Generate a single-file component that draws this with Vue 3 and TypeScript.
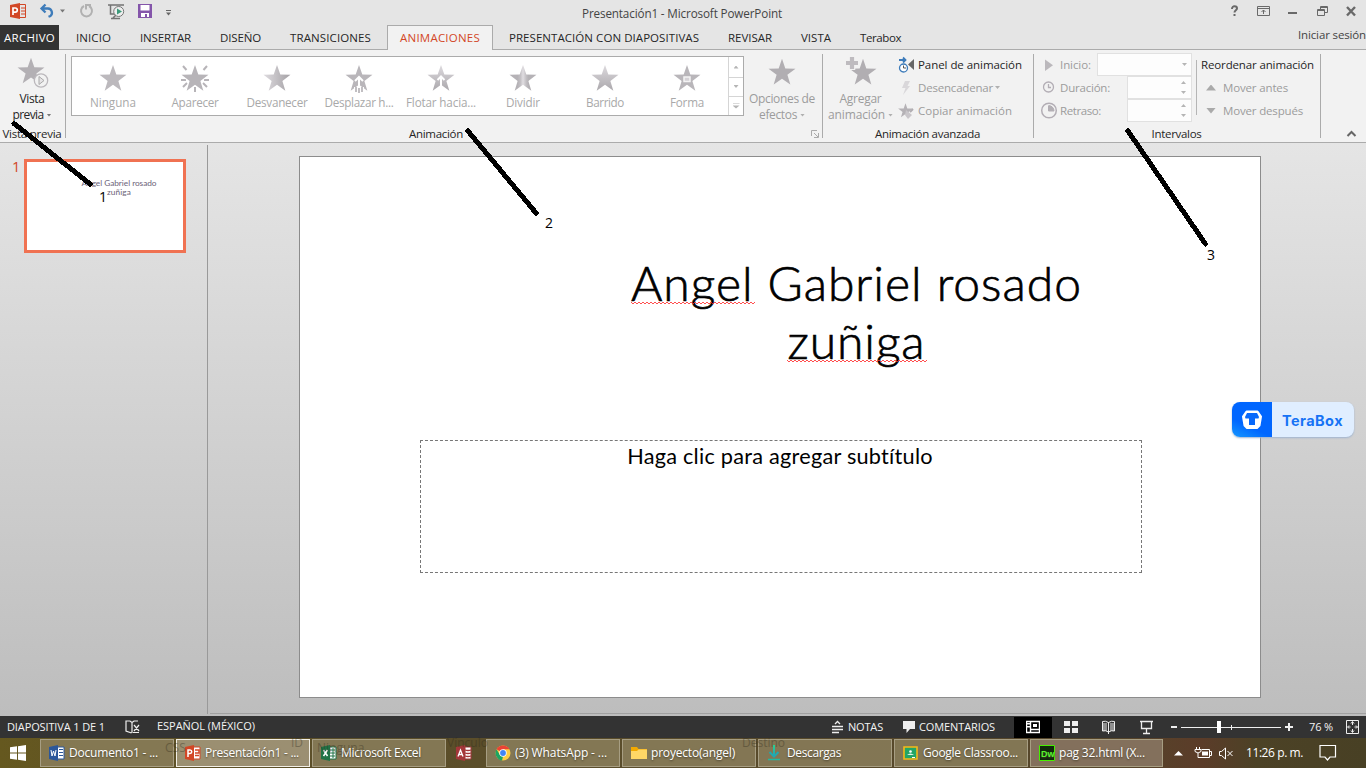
<script setup lang="ts">
import type { Directive } from 'vue'

// Tracks a label in or out so that it takes exactly the given width.
const vFit: Directive<HTMLElement, number> = {
  mounted(el, { value }) {
    const natural = el.getBoundingClientRect().width
    const count = (el.textContent ?? '').trim().length
    el.style.letterSpacing = `${(value - natural) / count}px`
  },
}

interface Label { text: string; width: number }

const tabs: Label[] = [
  { text: 'INICIO', width: 35 },
  { text: 'INSERTAR', width: 51 },
  { text: 'DISEÑO', width: 41 },
  { text: 'TRANSICIONES', width: 81 },
  { text: 'ANIMACIONES', width: 80 },
  { text: 'PRESENTACIÓN CON DIAPOSITIVAS', width: 190 },
  { text: 'REVISAR', width: 44 },
  { text: 'VISTA', width: 30 },
  { text: 'Terabox', width: 41 },
]

const effects: (Label & { kind: string; fill: string })[] = [
  { text: 'Ninguna', width: 46, kind: 'none', fill: '#bcb9bd' },
  { text: 'Aparecer', width: 47, kind: 'appear', fill: '#b7b4b8' },
  { text: 'Desvanecer', width: 61, kind: 'fade', fill: 'url(#fade)' },
  { text: 'Desplazar h...', width: 69, kind: 'fly', fill: '#b9b6ba' },
  { text: 'Flotar hacia...', width: 70, kind: 'float', fill: 'url(#rise)' },
  { text: 'Dividir', width: 34, kind: 'split', fill: 'url(#split)' },
  { text: 'Barrido', width: 38, kind: 'wipe', fill: 'url(#rise)' },
  { text: 'Forma', width: 34, kind: 'shape', fill: '#b9b6ba' },
]

const tasks: (Label & { icon: string })[] = [
  { text: 'Documento1 - ...', width: 89, icon: 'word' },
  { text: 'Presentación1 - ...', width: 94, icon: 'ppt' },
  { text: 'Microsoft Excel', width: 80, icon: 'excel' },
  { text: '', width: 0, icon: 'access' },
  { text: '(3) WhatsApp - ...', width: 92, icon: 'chrome' },
  { text: 'proyecto(angel)', width: 84, icon: 'folder' },
  { text: 'Descargas', width: 54, icon: 'download' },
  { text: 'Google Classroo...', width: 95, icon: 'classroom' },
  { text: 'pag 32.html (X...', width: 86, icon: 'dw' },
]

function starPoints(radius: number): string {
  return Array.from({ length: 10 }, (_, i) => {
    const r = i % 2 ? radius * 0.4 : radius
    const a = (Math.PI * i) / 5
    return `${(r * Math.sin(a)).toFixed(2)},${(-r * Math.cos(a)).toFixed(2)}`
  }).join(' ')
}
const star = starPoints(14.6)

function wave(width: number): string {
  return Array.from({ length: Math.floor(width / 2) + 1 }, (_, i) => `${i * 2},${i % 2 ? 3 : 1}`).join(' ')
}
</script>

<template>
  <div class="screen">
    <svg class="defs" width="0" height="0">
      <linearGradient id="fade"><stop offset=".1" stop-color="#d9d6da" /><stop offset=".9" stop-color="#aaa7ab" /></linearGradient>
      <linearGradient id="rise" x2="0" y2="1"><stop offset=".1" stop-color="#d8d5d9" /><stop offset=".9" stop-color="#b0adb1" /></linearGradient>
      <linearGradient id="split"><stop offset=".3" stop-color="#b5b2b6" /><stop offset=".4" stop-color="#c2bfc3" /><stop offset=".5" stop-color="#e0dde1" /><stop offset=".62" stop-color="#c2bfc3" /><stop offset=".7" stop-color="#b5b2b6" /></linearGradient>
      <linearGradient id="dl" x2="0" y2="1"><stop stop-color="#2dd08f" /><stop offset="1" stop-color="#1fa3b8" /></linearGradient>
    </svg>

    <header class="titlebar">
      <svg width="180" height="25">
        <path d="M10 5l10-2v16l-10-2z" fill="#d24726" />
        <path d="M20 4.500h5.500v13H20M21 8h4M21 11h4M21 14h4" fill="none" stroke="#d24726" />
        <path d="M13 15V8h2.200a2 2 0 010 4.200H13" fill="none" stroke="#fff" stroke-width="1.700" />
        <path d="M45.500 4.500L41.500 8.500l4 4M42 8.500h6a4.300 4.300 0 012.500 7.500l-2 .8" fill="none" stroke="#3e7cba" stroke-width="2.300" />
        <path d="M60 9.500h5l-2.500 3z" fill="#777" />
        <path d="M84 6a5.500 5.500 0 105 0M86 9.500V5h5" fill="none" stroke="#b1b1b1" stroke-width="2" />
        <path d="M108 5h16M110.500 5v9h5M113 18l3-3M111 18.500h9" fill="none" stroke="#737373" stroke-width="1.500" />
        <circle cx="118.700" cy="11.500" r="5" fill="#eee" stroke="#777" />
        <path d="M117 8.500l5 3-5 3z" fill="#3b9a7a" />
        <path d="M138 4h14v14h-14z" fill="#8455aa" /><path d="M140.500 5h9v5.500h-9zM141 13h8v4h-2v-3h-2v3h-4z" fill="#fff" />
        <path d="M166 10.500h5" stroke="#666" /><path d="M166 12.500h5l-2.500 3z" fill="#666" />
      </svg>
      <span class="doc-title"><span v-fit="200">Presentación1 - Microsoft PowerPoint</span></span>
      <svg width="146" height="25" fill="none" stroke="#696969">
        <path d="M12 9c0-4 5-3 5-.7 0 2-2.500 1.800-2.500 4.200M14.500 14v2" stroke-width="2" />
        <path d="M37.500 6.500h12v9h-12zM38 8.500h11M43.500 14v-4M41.500 12l2-2 2 2" />
        <path d="M68 13h9" stroke-width="2" />
        <path d="M97.500 9.500h7v6h-7zM97.500 10.500h7M100.500 9V6.500h7v6H105M100.500 7.500h7" />
        <path d="M127 7l8 8.500M135 7l-8 8.500" stroke-width="2.400" />
      </svg>
    </header>

    <nav class="tabs">
      <span class="file-tab"><span v-fit="51">ARCHIVO</span></span>
      <span v-for="tab in tabs" :key="tab.text" class="tab" :class="{ active: tab.text === 'ANIMACIONES' }">
        <span v-fit="tab.width">{{ tab.text }}</span>
      </span>
      <span class="sign-in"><span v-fit="68">Iniciar sesión</span></span>
    </nav>

    <section class="ribbon">
      <div class="group">
        <div class="group-body">
          <div class="big preview">
            <svg width="65" height="39">
              <polygon :points="star" transform="translate(31 21.800) scale(.97)" fill="#b3b0b4" />
              <circle cx="41" cy="30.500" r="6.700" fill="#f2f2f2" stroke="#bbb8bc" stroke-width="1.300" />
              <path d="M39 26.500v8l5-4z" fill="#e5e3e5" stroke="#aaa" />
            </svg>
            <span class="line"><span v-fit="25">Vista</span></span>
            <span class="line"><span v-fit="31">previa</span><i class="caret dark"></i></span>
          </div>
        </div>
        <span class="group-label"><span v-fit="59">Vista previa</span></span>
      </div>

      <div class="group animation">
        <div class="group-body">
          <div class="gallery">
            <div v-for="fx in effects" :key="fx.kind" class="effect">
              <svg width="36" height="34" viewBox="-18 -17 36 34">
                <g v-if="fx.kind === 'appear'" stroke="#b7b4b8" stroke-width="2">
                  <path d="M-12-12l3.500 4M12-12l-3.500 4M-14 2h5M14 2h-5M-12 9l4-4M12 9l-4-4M0 14V9" />
                </g>
                <polygon :points="star" :fill="fx.fill" transform="translate(0 1.200) scale(.97)" :class="{ outlined: fx.kind === 'appear' }" />
                <path v-if="fx.kind === 'fly'" d="M-4 3l4-4 4 4M0 0v10M-4 9v6M4 9v6" fill="none" stroke="#fff" stroke-width="2" />
                <path v-if="fx.kind === 'fly'" d="M-3 9v5M0 10v5M3 9v5" stroke="#b7b4b8" stroke-width="1.700" />
                <path v-if="fx.kind === 'float'" d="M-3.500 2L0-1.500 3.500 2M0 0v8" fill="none" stroke="#fff" stroke-width="2" />
                <path v-if="fx.kind === 'shape'" d="M-3-1h6v4.500h-6z" fill="#d5d2d6" stroke="#f4f3f4" stroke-width="1.500" />
              </svg>
              <span v-fit="fx.width">{{ fx.text }}</span>
            </div>
            <div class="scroller">
              <i class="tri up"></i><i class="tri down"></i><i class="tri more"></i>
            </div>
          </div>
          <div class="big options">
            <svg width="74" height="39">
              <polygon :points="star" transform="translate(37 23) scale(.97)" fill="#b1aeb2" />
            </svg>
            <span class="line"><span v-fit="66">Opciones de</span></span>
            <span class="line"><span v-fit="38">efectos</span><i class="caret"></i></span>
          </div>
        </div>
        <span class="group-label">
          <span v-fit="54">Animación</span>
          <svg class="launcher" width="9" height="9" fill="none" stroke="#aaa"><path d="M.5 6V.500H6M3 3l4 4M7.500 3v4.500H3" /></svg>
        </span>
      </div>

      <div class="group">
        <div class="group-body">
          <div class="big add">
            <svg width="74" height="39">
              <polygon :points="star" transform="translate(39 23) scale(.97)" fill="#b1aeb2" />
              <path d="M28 6v14M21 13h14" stroke="#f2f2f2" stroke-width="6.500" />
              <path d="M28 7v12M22 13h12" stroke="#bebbbf" stroke-width="4.200" />
            </svg>
            <span class="line"><span v-fit="42">Agregar</span></span>
            <span class="line"><span v-fit="57">animación</span><i class="caret"></i></span>
          </div>
          <div class="commands">
            <span class="command enabled">
              <svg width="18" height="18"><path d="M1 4h6M5 1.500L7.500 4 5 6.500" fill="none" stroke="#3e7cba" stroke-width="1.800" /><circle cx="5.500" cy="12" r="4" fill="#fff" stroke="#3e7cba" stroke-width="1.300" /><path d="M5.500 9.500V12H8" fill="none" stroke="#555" /><path d="M16 3v11l-6-5.500z" fill="#666" /></svg>
              <span v-fit="104">Panel de animación</span>
            </span>
            <span class="command">
              <svg width="18" height="18"><path d="M7 2h5L9.500 7H12l-7 9 2.500-7H4z" fill="#d9d7da" /></svg>
              <span v-fit="75">Desencadenar</span><i class="caret"></i>
            </span>
            <span class="command">
              <svg width="18" height="18"><polygon :points="star" transform="translate(7.500 9) scale(.53)" fill="#b5b2b6" /><path d="M8 8l6 5-4 4-3-4z" fill="#c9c6ca" /><path d="M12 10l3-3" stroke="#b0adb1" stroke-width="2" /></svg>
              <span v-fit="94">Copiar animación</span>
            </span>
          </div>
        </div>
        <span class="group-label"><span v-fit="105">Animación avanzada</span></span>
      </div>

      <div class="group">
        <div class="group-body">
          <div class="timing">
            <div class="field">
              <svg width="20" height="20"><path d="M5 4.500v11.500l8-5.700z" fill="#bbb8bc" /></svg>
              <span class="name"><span v-fit="31">Inicio:</span></span>
              <span class="box combo"><i class="tri down"></i></span>
            </div>
            <div class="field">
              <svg width="20" height="20" fill="none" stroke="#b3aeb5" stroke-width="1.300"><circle cx="8.500" cy="9" r="5" /><path d="M8.500 6v3.500H11" /></svg>
              <span class="name"><span v-fit="50">Duración:</span></span>
              <span class="box"><i class="tri up"></i><i class="tri down"></i></span>
            </div>
            <div class="field">
              <svg width="20" height="20" fill="none" stroke="#b3aeb5"><circle cx="9" cy="9.500" r="7.300" stroke-width="1.500" /><path d="M8.500 5v5H14a5.500 5.500 0 00-5.500-5.500" fill="#b3b0b4" /></svg>
              <span class="name"><span v-fit="41">Retraso:</span></span>
              <span class="box"><i class="tri up"></i><i class="tri down"></i></span>
            </div>
          </div>
          <div class="reorder">
            <span class="command enabled"><span v-fit="113">Reordenar animación</span></span>
            <span class="command"><i class="tri up large"></i><span v-fit="65">Mover antes</span></span>
            <span class="command"><i class="tri down large"></i><span v-fit="80">Mover después</span></span>
          </div>
        </div>
        <span class="group-label"><span v-fit="50">Intervalos</span></span>
      </div>
      <div class="collapse">
        <svg width="11" height="8" fill="none" stroke="#666" stroke-width="2"><path d="M1.500 6l4-4 4 4" /></svg>
      </div>
    </section>

    <main class="workspace">
      <aside class="slides">
        <span class="slide-number">1</span>
        <div class="thumb"><p><span v-fit="75">Angel Gabriel rosado</span><br /><span v-fit="24">zuñiga</span></p></div>
      </aside>
      <section class="stage">
        <article class="slide">
          <h1>
            <span class="title-line"><span v-fit="451">Angel Gabriel rosado</span><svg class="squiggle first" width="124" height="4"><polyline :points="wave(124)" /></svg></span>
            <span class="title-line"><span v-fit="138">zuñiga</span><svg class="squiggle second" width="140" height="4"><polyline :points="wave(140)" /></svg></span>
          </h1>
          <div class="subtitle"><span v-fit="306">Haga clic para agregar subtítulo</span></div>
        </article>
      </section>
      <div class="terabox">
        <span class="mark">
          <svg width="22" height="20"><path d="M5.500 1.500h11l3.500 5-1.500 9-2.500 2.500h-10l-2.500-2.500-1.500-9z" fill="#fff" stroke="#fff" stroke-width="2" stroke-linejoin="round" /><path d="M6 3h10l2 4-.5 1.500h-3.500V15H8V8.500H4.500L4 7z" fill="#0869fb" /></svg>
        </span>
        <span class="brand"><span v-fit="61">TeraBox</span></span>
      </div>
    </main>

    <footer class="status">
      <span class="slide-count"><span v-fit="98">DIAPOSITIVA 1 DE 1</span></span>
      <svg class="proof" width="16" height="16" fill="none" stroke="#eee"><path d="M6.500 14l-5.500-2V2h4l2 1.500 2-1.500h4M7 3.500V14M9 6l5 6M14 6l-5 6M8 13.500h6" stroke-width="1.200" /></svg>
      <span class="language"><span v-fit="98">ESPAÑOL (MÉXICO)</span></span>
      <svg class="notes" width="12" height="14" fill="none" stroke="#eee"><path d="M0 6.500h11M0 9.500h11M0 12.500h7M3 4l2.500-2.500L8 4" stroke-width="1.300" /></svg>
      <span class="notes-label"><span v-fit="35">NOTAS</span></span>
      <svg width="16" height="14"><path d="M0 1h12v8H7l-3.500 4V9H0z" fill="#eee" /></svg>
      <span class="comments-label"><span v-fit="76">COMENTARIOS</span></span>
      <span class="view-active">
        <svg width="14" height="14" fill="none" stroke="#fff"><path d="M.5 1.500h13v11H.500zM4.500 2v10M5 9.500h9" stroke-width="1.400" /><path d="M1 3h3v1.500H1zM1 6h3v1.500H1zM7 4h4v3H7z" fill="#fff" stroke="none" /></svg>
      </span>
      <svg width="314" height="22" fill="none" stroke="#eee">
        <path d="M12 5h6v5h-6zM20 5h6v5h-6zM12 12h6v5h-6zM20 12h6v5h-6z" fill="#eee" stroke="none" />
        <path d="M50.500 5.500q3-1 6 1 3-2 6-1v9.500q-3-1-6 1-3-2-6-1zM56.500 6v12M51 8h4M51 10h4M51 12h4M51 14h4M58 8h4M58 10h4M58 12h4M58 14h4" />
        <path d="M88 5.500h13M89.500 6v6.500h10V6M94.500 13v4M91 17.500h7" stroke-width="1.300" />
        <path d="M119 11h6M233 11h8M237 7v8" stroke-width="2" />
        <path d="M129 11.500h100M179.500 9v5" /><path d="M165 5h4v12h-4z" fill="#fff" stroke="none" />
        <path d="M294.500 4.500h12v13h-12zM300.500 9V6M299 7.500l1.500-2 1.500 2M300.500 13v3M299 14.500l1.500 2 1.500-2M298.500 11H296M302.500 11h3M297 9.500L295.500 11l1.500 1.500M304 9.500l1.500 1.500-1.500 1.500" />
      </svg>
      <span class="zoom-value"><span v-fit="24">76 %</span></span>
    </footer>

    <footer class="taskbar">
      <div class="behind">
        <span class="g-css">CSS</span><span class="g-id">ID</span><span class="g-none">Ninguna</span><span class="g-link">Vínculo</span><span class="g-target">Destino</span>
      </div>
      <span class="start"><svg width="16" height="16"><path d="M0 2.300l7-1v6.200H0zM8 1.200L16 0v7.500H8zM0 8.500h7v6.200l-7-1zM8 8.500h8V16l-8-1.200z" fill="#fff" /></svg></span>
      <span v-for="task in tasks" :key="task.icon" class="task" :class="[task.icon, { current: task.icon === 'ppt' }]">
        <svg width="17" height="16" viewBox="0 0 17 16">
          <g v-if="task.icon === 'word'"><path d="M8 2h7v12H8z" fill="#fff" stroke="#2b579a" /><path d="M0 2l9-2v16l-9-2z" fill="#2b579a" /><path d="M10 4.500h4M10 7.500h4M10 10.500h4" stroke="#2b579a" /><path d="M2 5l1 6 1.500-5L6 11l1-6" fill="none" stroke="#fff" /></g>
          <g v-else-if="task.icon === 'ppt'"><path d="M8 2h7v12H8z" fill="#fff" stroke="#d24726" /><path d="M0 2l9-2v16l-9-2z" fill="#d24726" /><path d="M10 5h4v3h-4M10 10.500h4" fill="none" stroke="#d24726" stroke-width="1.500" /><path d="M3 12V5h2a1.700 1.700 0 010 3.500H3" fill="none" stroke="#fff" stroke-width="1.500" /></g>
          <g v-else-if="task.icon === 'excel'"><path d="M8 2h7v12H8z" fill="#fff" stroke="#217346" /><path d="M0 2l9-2v16l-9-2z" fill="#217346" /><path d="M9 5h5M9 8h5M9 11h5M12 3v10" stroke="#217346" /><path d="M2.500 5l4 6M6.500 5l-4 6" stroke="#fff" stroke-width="1.500" /></g>
          <g v-else-if="task.icon === 'access'"><path d="M9 2h6v12H9z" fill="#fff" stroke="#a4373a" /><path d="M0 2l9-2v16l-9-2z" fill="#a4373a" /><path d="M9 5q3 1 6 0M9 8q3 1 6 0M9 11q3 1 6 0" fill="none" stroke="#a4373a" stroke-width="1.300" /><path d="M2 11.500L4.500 5 7 11.500M3 9.500h3" fill="none" stroke="#fff" stroke-width="1.300" /></g>
          <g v-else-if="task.icon === 'chrome'"><circle cx="8" cy="8" r="7.500" fill="#ffcd40" /><path d="M8 8L1.500 4.300A7.500 7.500 0 0114.500 4.300H8z" fill="#ea4335" /><path d="M1.500 4.300L5 10l3 1.500L7 15.500A7.500 7.500 0 011.500 4.300" fill="#1da462" /><circle cx="8" cy="8" r="3.700" fill="#fff" /><circle cx="8" cy="8" r="2.900" fill="#4285f4" /></g>
          <g v-else-if="task.icon === 'folder'"><path d="M0 2h6l1.500 2H16v10H0z" fill="#f2a900" /><path d="M0 6h6l1.500-1.500H16V14H0z" fill="#ffd766" /></g>
          <g v-else-if="task.icon === 'download'"><path d="M2.500 7L7 11.500 11.500 7" fill="none" stroke="#20a9b0" stroke-width="2" /><path d="M6 0h2v11H6z" fill="url(#dl)" /><path d="M1 14.500h12" stroke="#21b8a1" stroke-width="1.500" /></g>
          <g v-else-if="task.icon === 'classroom'"><path d="M1 2h13v12H1z" fill="#23a566" stroke="#f5ba18" stroke-width="1.600" /><circle cx="7.500" cy="6.500" r="1.300" fill="#fff" /><path d="M4 10q3.500-3 7 0z" fill="#dff5e8" /><path d="M9 12.500h3" stroke="#fff" /></g>
          <g v-else><path d="M.500.500h15v15H.500z" fill="#10290b" stroke="#47f000" /><text x="2" y="11.500" class="dw-text">Dw</text></g>
        </svg>
        <span v-if="task.text" v-fit="task.width">{{ task.text }}</span>
      </span>
      <span class="tray">
        <svg width="81" height="28" fill="none" stroke="#fff">
          <path d="M9 16.500h9L13.500 12z" fill="#fff" stroke="none" />
          <path d="M36.500 10.500h8v8h-10M45 12.500h1.500v4H45" /><path d="M37 12.500h6v4h-6z" fill="#fff" stroke="none" /><path d="M31.500 8v2.500M34.500 8v2.500M30 10.500h6v2q-3 3-6 0zM33 14v4.500h3" />
          <path d="M54.500 12.500h2l4-3.500v11l-4-3.500h-2zM62.500 12l5 5M67.500 12l-5 5" />
        </svg>
        <span class="clock"><span v-fit="57">11:26 p. m.</span></span>
        <svg width="18" height="18" fill="none" stroke="#fff"><path d="M1 1.500h15.500V13H11l-2.500 3L6 13H1z" stroke-width="1.200" /></svg>
      </span>
    </footer>

    <svg class="annotations" width="1366" height="768">
      <path d="M14 123.500L90 184M468 131l68 82M1128 131l77.500 113" fill="none" stroke="#000" stroke-width="5" stroke-linecap="round" shape-rendering="crispEdges" />
      <text x="99" y="202">1</text><text x="545" y="228">2</text><text x="1207" y="260">3</text>
    </svg>
  </div>
</template>

<style>
html, body { margin: 0; overflow: hidden; }
</style>

<style scoped>
.screen { position: relative; width: 1366px; height: 768px; display: flex; flex-direction: column; background: #e5e5e5; font: 11.500px/16px "Open Sans", "Noto Sans", sans-serif; color: #262626; overflow: hidden; }
.screen span { white-space: nowrap; }
.screen svg { display: block; flex: none; }
.defs { position: absolute; }
.titlebar { height: 25px; display: flex; }
.doc-title { flex: 1; padding: 5px 0 0 402px; color: #444; font-size: 11.700px; }
.tabs { height: 25px; display: flex; gap: 3px; box-shadow: inset 0 -1px #ababab; }
.file-tab { width: 55px; height: 20px; padding: 5px 0 0 4px; background: #333; color: #fff; }
.file-tab + .tab { margin-left: 1px; }
.tab { padding: 5px 13px 0; height: 20px; }
.tab.active { color: #d24726; padding: 4px 12px 0; border: 1px solid #ababab; border-bottom: 0; background: #f2f2f2; }
.sign-in { margin-left: auto; padding-top: 2px; color: #444; }

.ribbon { height: 92px; display: grid; grid-template-columns: 66px 757px 211px 287px 1fr; background: #f2f2f2; border-bottom: 1px solid #ababab; }
.group { display: flex; flex-direction: column; background: linear-gradient(#ababab, #ababab) no-repeat right 4px / 1px 84px; }
.group-body { display: flex; height: 76px; }
.group-label { display: flex; justify-content: center; height: 16px; margin-right: 2px; color: #262626; }
.animation .group-label { justify-content: space-between; align-items: center; padding: 0 1px 0 343px; }
.big { display: flex; flex-direction: column; align-items: center; color: #9c9c9c; font-size: 12px; }
.big svg { margin-bottom: 2px; }
.preview { width: 64px; color: #262626; }
.line { display: flex; align-items: center; height: 16px; }
.caret { width: 5px; height: 3px; background: #b0b0b0; clip-path: polygon(0 0, 100% 0, 50% 100%); margin-left: 3px; }
.caret.dark { background: #777; }
.gallery { display: flex; width: 671px; height: 58px; margin: 6px 0 0 5px; border: 1px solid #ababab; background: #fff; }
.effect { width: 82px; display: flex; flex-direction: column; align-items: center; color: #a9a9a9; font-size: 11.700px; padding-top: 4px; box-sizing: border-box; }
.effect > span { margin-top: -1px; }
.outlined { stroke: #fff; stroke-width: 2; paint-order: stroke; }
.scroller { flex: 1; display: grid; grid-template-rows: 20px 19px 19px; border-left: 1px solid #d5d5d5; place-items: center; background: linear-gradient(#d5d5d5, #d5d5d5) 0 20px / 100% 1px no-repeat, linear-gradient(#d5d5d5, #d5d5d5) 0 39px / 100% 1px no-repeat; }
.tri { width: 5px; height: 3px; background: #b5b5b5; }
.tri.up { clip-path: polygon(50% 0, 100% 100%, 0 100%); }
.tri.down { clip-path: polygon(0 0, 100% 0, 50% 100%); }
.tri.more { width: 7px; height: 6px; clip-path: polygon(0 0, 100% 0, 100% 1px, 0 1px, 0 3px, 100% 3px, 50% 100%, 0 3px); }
.tri.large { width: 10px; height: 6px; margin: 0 7px 0 5px; background: #aaa; }
.options { width: 74px; margin-left: 1px; }
.add { width: 75px; }
.commands { padding-top: 3px; }
.command { height: 23px; display: flex; align-items: center; color: #9c9c9c; }
.command svg { margin-right: 2px; }
.command .caret { margin-left: 2px; }
.enabled { color: #262626; }
.timing { width: 158px; padding-top: 3px; }
.field { height: 23px; display: flex; align-items: center; color: #9c9c9c; }
.field svg { margin-left: 6px; }
.box { box-sizing: border-box; width: 65px; height: 23px; margin-left: auto; border: 1px solid #e1e1e1; background: #fdfdfd; display: flex; flex-direction: column; align-items: flex-end; justify-content: center; gap: 7px; padding-right: 5px; }
.combo { width: 95px; padding-right: 4px; }
.reorder { margin-left: 4px; padding: 3px 0 0 5px; background: linear-gradient(#b5b5b5, #b5b5b5) 0 10px / 1px 55px no-repeat; }
.collapse { padding: 80px 0 0 25px; }

.workspace { position: relative; height: 573px; display: flex; background: linear-gradient(#e5e5e5, #bdbdbd); }
.slides { width: 207px; display: flex; align-items: flex-start; background: linear-gradient(#999, #999) right 2px / 1px 569px no-repeat; padding-right: 1px; }
.slide-number { width: 12px; margin: 16px 0 0 12px; color: #d24726; font-size: 14.500px; }
.thumb { width: 156px; height: 88px; margin-top: 16px; border: 3px solid #f07252; background: #fff; }
.thumb p { margin: 17px 0 0 27px; width: 130px; text-align: center; font: 8.300px/9px Lato, sans-serif; color: #6c6378; }
.stage { flex: 1; background: linear-gradient(#a0a0a0, #a0a0a0) 2px 570px / 100% 1px no-repeat; }
.slide { width: 960px; height: 540px; margin: 13px 0 0 91px; border: 1px solid #8c8c8c; background: #fff; display: flow-root; color: #000; }
.slide h1 { margin: 97px 0 0 300px; width: 513px; font: 300 48px/58px Lato, sans-serif; -webkit-text-stroke: .7px #000; }
.title-line { display: flex; justify-content: center; position: relative; height: 58px; }
.squiggle { position: absolute; fill: none; stroke: #f22; stroke-width: .8; }
.first { left: 31px; top: 47px; }
.second { left: 187px; top: 47px; }
.subtitle { width: 720px; height: 131px; margin: 70px 0 0 120px; border: 1px dashed #777; text-align: center; font: 21.700px/30px Lato, sans-serif; text-indent: -2px; }
.terabox { position: absolute; left: 1232px; top: 259px; width: 122px; height: 35px; display: flex; border-radius: 8px; overflow: hidden; background: #e0eeff; box-shadow: 0 1px 2px #9fb4d0; }
.mark { width: 40px; display: flex; align-items: center; justify-content: center; background: linear-gradient(25deg, #1598ff, #0066ff 35%); }
.brand { padding: 10px 0 0 10px; font: 700 14.500px/18px Inter, sans-serif; color: #1673f5; }

.status { height: 22px; display: flex; align-items: center; background: #333; color: #f3f3f3; font-size: 11px; }
.slide-count { width: 118px; padding-left: 7px; }
.proof { margin-right: 16px; }
.language { width: 675px; padding-bottom: 2px; }
.notes { margin-right: 4px; }
.notes-label { width: 55px; }
.comments-label { width: 95px; }
.view-active { width: 38px; height: 21px; background: #000; display: flex; align-items: center; justify-content: center; }
.zoom-value { margin-left: -57px; }

.taskbar { position: relative; height: 30px; display: flex; align-items: center; color: #fff; font-size: 12px; background: linear-gradient(90deg, #65581f, #5d5028 15%, #5a4d2b 45%, #55452a 82%, #5b3c29 88%, #4c4226 92%, #484024); }
.behind { position: absolute; z-index: 1; left: 0; top: 0; }
.behind span { position: absolute; color: #2c281a; opacity: .35; font-size: 12px; line-height: 14px; }
.g-css { left: 165px; top: 3px; }
.g-id { left: 291px; top: -2px; }
.g-none { left: 317px; top: 3px; }
.g-link { left: 447px; top: -2px; }
.g-target { left: 742px; top: -2px; }
.start { width: 30px; padding-left: 10px; }
.task { box-sizing: border-box; width: 134px; height: 28px; margin-right: 2px; padding-left: 8px; border: 1px solid #a79e83; display: flex; align-items: center; gap: 3px; background: rgb(139 127 93 / 83%); text-shadow: 0 1px 2px #453e2c; }
.task.current { background: rgb(160 149 119 / 93%); border-color: #f2efe6; }
.task.access { border: 0; width: 37px; background: none; margin-right: 1px; }
.task.dw { width: 133px; background: #83705c; }
.dw-text { font: bold 9px "Liberation Sans", sans-serif; fill: #58f52c; }
.tray { display: flex; align-items: center; }
.clock { width: 73px; }

.annotations { position: absolute; inset: 0; pointer-events: none; }
.annotations text { font: 14px "Open Sans", sans-serif; fill: #000; }
</style>
